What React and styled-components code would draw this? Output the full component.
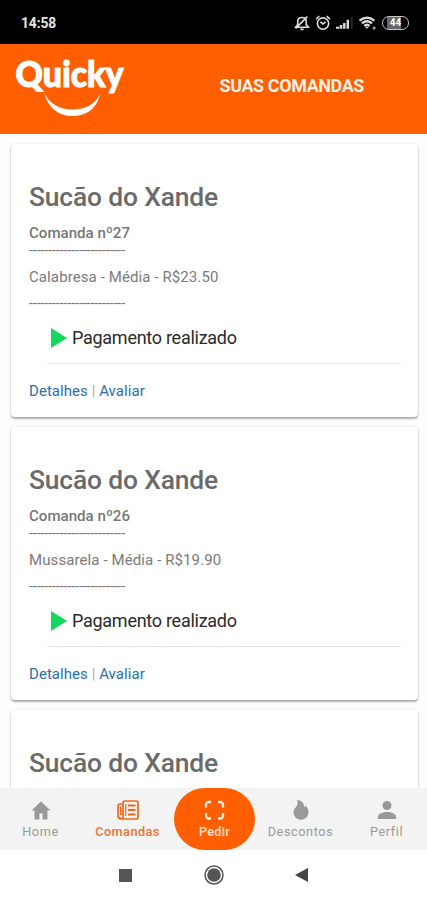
import styled, { createGlobalStyle } from 'styled-components';

const orange = '#ff5f00';

const GlobalStyle = createGlobalStyle`
  *{
    box-sizing: border-box;
  }
  body{
    margin: 0;
    background: #fdfdfd;
    font-family: Roboto, "Liberation Sans", sans-serif;
  }
  svg{
    display: block;
  }
`;
const Screen = styled.div`
  display: flex;
  flex-direction: column;
  height: 900px;
  width: 427px;
  overflow: hidden;
`;
const StatusBar = styled.div`
  display: flex;
  flex: none;
  align-items: center;
  justify-content: space-between;
  height: 44px;
  padding: 2px 18px 0 21px;
  background: #000;
  color: #e4e4e4;
  font-size: 13.8px;
  font-weight: 700;
  letter-spacing: -.1px;
`;
const StatusIcons = styled.div`
  display: flex;
  align-items: center;
  gap: 5px;
`;
const Battery = styled.div`
  width: 27px;
  height: 14px;
  border: 1.5px solid #c8c8c8;
  border-radius: 7px;
  background: linear-gradient(90deg, #000 4px, #666 4px, #666 18px, #000 18px);
  color: #fff;
  font-size: 10px;
  line-height: 12px;
  letter-spacing: 0;
  text-align: center;
`;
const Header = styled.header`
  display: flex;
  flex: none;
  height: 90px;
  background: ${orange};
`;
const LogoHolder = styled.div`
  width: 219.5px;
  padding: 10px 0 0 13px;
`;
const PageTitle = styled.h1`
  margin: 0;
  padding-top: 31px;
  color: #fff1e6;
  font-size: 17.9px;
  font-weight: 700;
  line-height: 22px;
  letter-spacing: -.35px;
  white-space: nowrap;
`;
const Content = styled.main`
  flex: 1;
  min-height: 0;
  overflow: hidden;
  padding: 10px 9px 0 11px;
`;
const Card = styled.section`
  height: 273px;
  margin-bottom: 10px;
  padding: 37px 17px 0 18px;
  border-radius: 4px;
  background: #fff;
  box-shadow: 0 2px 2px rgba(0, 0, 0, .3), 0 0 2px rgba(0, 0, 0, .14);
`;
const CardTitle = styled.h2`
  margin: 0;
  color: #6a6a6a;
  font-size: 26.4px;
  font-weight: 500;
  line-height: 32px;
  letter-spacing: -.15px;
  white-space: nowrap;
`;
const OrderNumber = styled.div`
  margin: 10px 0 2px;
  color: #777;
  font-size: 15.1px;
  font-weight: 500;
  line-height: 20px;
`;
const Dashes = styled.div`
  height: 10px;
  color: #777;
  font-size: 13.9px;
  line-height: 10px;
  white-space: nowrap;
`;
const OrderItem = styled.div`
  margin: 12px 0 11px;
  color: #7a7a7a;
  font-size: 15px;
  line-height: 20px;
  letter-spacing: .1px;
  white-space: nowrap;
`;
const Payment = styled.div`
  display: flex;
  align-items: center;
  gap: 5px;
  height: 51px;
  margin: 5px 0 0 18px;
  padding-left: 4px;
  border-bottom: 1px solid #e6e6e6;
  color: #2a2a2a;
  font-size: 18px;
  line-height: 24px;
  letter-spacing: -.27px;
`;
const Links = styled.div`
  margin-top: 17px;
  color: #aaa;
  font-size: 15px;
  line-height: 20px;
  letter-spacing: .05px;
  a{
    color: #2b70a9;
    text-decoration: none;
  }
`;
const TabBar = styled.nav`
  display: flex;
  flex: none;
  height: 62px;
  background: #f3f3f3;
`;
const Tab = styled.div`
  display: flex;
  flex-direction: column;
  align-items: center;
  width: ${props => props.$width}px;
  padding-top: 10px;
  border-radius: ${props => props.$round ? '31px' : '0'};
  background: ${props => props.$round ? orange : 'transparent'};
  color: ${props => props.$color || '#999'};
  font-size: 12.7px;
  font-weight: ${props => props.$bold ? 500 : 400};
  letter-spacing: ${props => props.$spacing || '.6px'};
  line-height: 16px;
  svg{
    width: 24px;
    height: 24px;
    margin-bottom: 2px;
  }
`;
const SystemBar = styled.div`
  display: flex;
  flex: none;
  align-items: center;
  justify-content: center;
  gap: 71.5px;
  height: 50px;
  background: #fff;
`;

function Logo() {
  return(
    <svg width="116" height="68" viewBox="0 0 116 68">
      <text x="2.5" y="33" fill="#fff" stroke="#fff" strokeWidth="1.1" fontFamily="Lato, sans-serif" fontWeight="900" fontSize="35.5" textLength="108" lengthAdjust="spacingAndGlyphs">Quicky</text>
      <path d="M31.500 39.500C37 50 47 55.500 59 55.500C71 55.500 82 51 87 40C84 55 73 62 59 62C46 62 35 54 31.500 39.500Z" fill="#fff" />
    </svg>
  )
};

function StatusIconRow() {
  return(
    <StatusIcons>
      <svg width="16" height="16" viewBox="0 0 15 15" fill="none" stroke="#ddd" strokeWidth="1.5">
        <path d="M1.500 11.500h12L11.500 9V6C11.500 3.500 10 2.300 7.500 2.300S3.500 3.500 3.500 6v3Z M6 13.500h3 M1.500 12.500L12.500 1.500" />
      </svg>
      <svg width="16" height="16" viewBox="0 0 15 15" fill="none" stroke="#ddd" strokeWidth="1.5">
        <circle cx="7.500" cy="8" r="5.300" />
        <path d="M5 6.500L7.500 8.500L10 6.500 M1 4L4 1 M14 4L11 1" />
      </svg>
      <svg width="18" height="16" viewBox="0 0 17 15" fill="#ddd">
        <path d="M0 11h3v2H0z M3.500 9.500h2.500V13H3.500z M6.700 7.500h2.300V13H6.700z M10 4.500h2.300V13H10z" />
        <path d="M14.500 2h1v11h-1z" fill="#444" />
      </svg>
      <svg width="18" height="16" viewBox="0 0 17 15" fill="none" stroke="#ddd" strokeWidth="2.2">
        <path d="M.5 5.200Q7.500 -.3 14.500 5.200 M2.700 7.800Q7.500 4 12.300 7.800 M5 10.300Q7.500 8 10 10.300" />
        <path d="M5.500 11h4L7.500 13z" fill="#ddd" stroke="none" />
        <path d="M13 11h2.500v2.500H13z" fill="#aaa" stroke="none" />
      </svg>
      <Battery>44</Battery>
    </StatusIcons>
  )
};

function OrderCard({ number, item }) {
  return(
    <Card>
      <CardTitle>Sucão do Xande</CardTitle>
      {item && (
        <>
          <OrderNumber>Comanda nº{number}</OrderNumber>
          <Dashes>-------------------------</Dashes>
          <OrderItem>{item}</OrderItem>
          <Dashes>-------------------------</Dashes>
          <Payment>
            <svg width="16" height="20" viewBox="0 0 16 20"><path d="M0 0L16 10L0 20Z" fill="#13d85c" /></svg>
            Pagamento realizado
          </Payment>
          <Links><a href="#void">Detalhes</a> | <a href="#void">Avaliar</a></Links>
        </>
      )}
    </Card>
  )
};

function App() {
  return(
    <Screen>
      <GlobalStyle />
      <StatusBar>
        <span>14:58</span>
        <StatusIconRow />
      </StatusBar>
      <Header>
        <LogoHolder><Logo /></LogoHolder>
        <PageTitle>SUAS COMANDAS</PageTitle>
      </Header>
      <Content>
        <OrderCard number="27" item="Calabresa - Média - R$23.50" />
        <OrderCard number="26" item="Mussarela - Média - R$19.90" />
        <OrderCard />
      </Content>
      <TabBar>
        <Tab $width={81}>
          <svg viewBox="0 0 24 24" fill="#999"><path d="M12 3.500L2.500 12.500H5.500v9h5v-6h3v6h5v-9h3Z" /></svg>
          Home
        </Tab>
        <Tab $width={93} $color="#ee7432" $bold $spacing=".45px">
          <svg viewBox="0 0 24 24" fill="none" stroke="#ee681f" strokeWidth="1.700">
            <path d="M7 18V5a2 2 0 0 1 2-2h11a2 2 0 0 1 2 2v14a2 2 0 0 1-2 2H5a3 3 0 0 1-3-3V8a2 2 0 0 1 2-2h3M7 18a2 2 0 0 1-4 1M4.700 8.500V17" />
            <path d="M9.800 6v12" strokeWidth="1.200" />
            <path d="M12 7.500h7.500M12 12h7.500M12 16.500h7.500" strokeWidth="2" />
          </svg>
          Comandas
        </Tab>
        <Tab $width={81} $round $bold $color="#ffe5d5" $spacing=".3px">
          <svg viewBox="0 0 24 24" fill="none" stroke="#fff1e6" strokeWidth="2.300">
            <path d="M3 9.500V6.500a3 3 0 0 1 2-2.500H8M15 4h3a3 3 0 0 1 2 2.500v3M20 15v3a3 3 0 0 1-2 2.500H15M8 20.500H5a3 3 0 0 1-2-2.500v-3" />
          </svg>
          Pedir
        </Tab>
        <Tab $width={91}>
          <svg viewBox="0 0 24 24" fill="#999"><path d="M8 2C13 2.500 15.500 5.500 15 9.500C15.800 9 16.200 8 16.200 7.300C18.500 9.500 19.500 11.500 19.500 14.500A7.500 7.300 0 0 1 4.500 14.500C4.500 9.500 10.500 8 8 2Z" /></svg>
          Descontos
        </Tab>
        <Tab $width={81}>
          <svg viewBox="0 0 24 24" fill="#999"><circle cx="12" cy="7.500" r="4.500" /><path d="M3 21v-2.500C3 15.500 8 14 12 14s9 1.500 9 4.500V21Z" /></svg>
          Perfil
        </Tab>
      </TabBar>
      <SystemBar>
        <svg width="13" height="13"><rect width="13" height="13" fill="#555" /></svg>
        <svg width="20" height="20"><circle cx="10" cy="10" r="9" fill="none" stroke="#555" strokeWidth="1.500" /><circle cx="10" cy="10" r="6.800" fill="#555" /></svg>
        <svg width="13" height="14"><path d="M0 7L13 0V14Z" fill="#444" /></svg>
      </SystemBar>
    </Screen>
  )
};

export default App;
